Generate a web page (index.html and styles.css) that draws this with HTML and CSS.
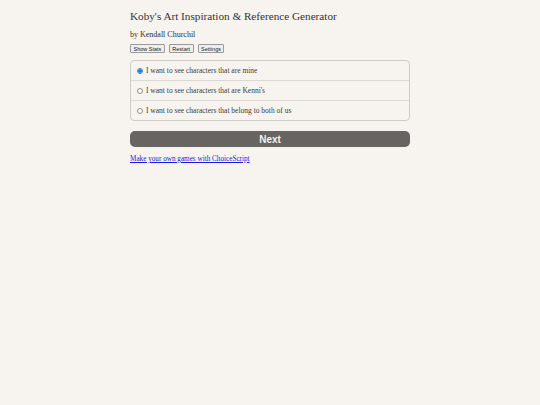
FILE: index.html
```html
<!DOCTYPE html>
<html>
<head>
<meta charset="utf-8">
<link rel="stylesheet" href="styles.css">
</head>
<body>
<div class="container">
  <h1 class="title">Koby's Art Inspiration &amp; Reference Generator</h1>
  <div class="author">by Kendall Churchil</div>
  <div class="buttons">
    <button class="btn">Show Stats</button>
    <button class="btn">Restart</button>
    <button class="btn">Settings</button>
  </div>
  <div class="choices">
    <label class="choice"><span class="radio checked"></span>I want to see characters that are mine</label>
    <label class="choice"><span class="radio"></span>I want to see characters that are Kenni's</label>
    <label class="choice"><span class="radio"></span>I want to see characters that belong to both of us</label>
  </div>
  <div class="next">Next</div>
  <a class="link" href="#">Make your own games with ChoiceScript</a>
</div>
</body>
</html>
```
FILE: styles.css
```css
html, body { margin: 0; padding: 0; }
body {
  background: #f7f4f0;
  font-family: "Liberation Serif", Georgia, serif;
  color: #2b2b2b;
  width: 540px;
  height: 405px;
}
.container {
  width: 280px;
  margin: 0 auto;
  padding-top: 9px;
}
.title {
  font-size: 11.2px;
  font-weight: normal;
  margin: 0;
  line-height: 15px;
  color: #333;
}
.author {
  font-size: 8px;
  margin-top: 6px;
  line-height: 10px;
  color: #333;
}
.buttons {
  display: flex;
  gap: 4px;
  margin-top: 4px;
}
.btn {
  font-family: "Liberation Sans", Arial, sans-serif;
  font-size: 5.5px;
  padding: 1px 2.5px;
  height: 9px;
  line-height: 6px;
  border: 1px solid #9a9a9a;
  border-radius: 1px;
  background: #efefef;
  color: #222;
}
.choices {
  margin-top: 7px;
  border: 1px solid #cfcbc7;
  border-radius: 4px;
  display: flex;
  flex-direction: column;
}
.choice {
  display: flex;
  align-items: center;
  height: 19px;
  padding-left: 6px;
  font-size: 7.5px;
  color: #3a3a3a;
}
.choice + .choice { border-top: 1px solid #dcd8d4; }
.radio {
  width: 4px;
  height: 4px;
  border: 1px solid #8a8a8a;
  border-radius: 50%;
  margin-right: 3px;
  background: #fff;
  box-sizing: content-box;
}
.radio.checked {
  border-color: #2a7de1;
  background: radial-gradient(circle, #1f73e0 55%, #fff 60%);
}
.next {
  margin-top: 10px;
  height: 16px;
  border-radius: 5px;
  background: #676562;
  color: #f2f2f2;
  font-family: "Liberation Sans", Arial, sans-serif;
  font-weight: bold;
  font-size: 10px;
  display: flex;
  align-items: center;
  justify-content: center;
}
.link {
  display: inline-block;
  margin-top: 6px;
  font-size: 7.2px;
  color: #1a1ae6;
}
```
